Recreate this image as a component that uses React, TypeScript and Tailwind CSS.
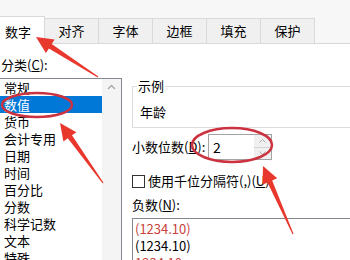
import React from "react";

const tabs = ["对齐", "字体", "边框", "填充", "保护"];
const categories = [
  "常规",
  "数值",
  "货币",
  "会计专用",
  "日期",
  "时间",
  "百分比",
  "分数",
  "科学记数",
  "文本",
  "特殊",
];
const negatives = [
  { text: "(1234.10)", red: true },
  { text: "(1234.10)", red: false },
  { text: "1234.10", red: true },
];

type Pt = [number, number];

// annotation arrow: thin shaft that widens into a triangular head
const arrowPoints = (tail: Pt, tip: Pt) => {
  const dx = tip[0] - tail[0];
  const dy = tip[1] - tail[1];
  const len = Math.hypot(dx, dy);
  const ux = dx / len;
  const uy = dy / len;
  const nx = -uy;
  const ny = ux;
  const head = 17;
  const base: Pt = [tip[0] - ux * head, tip[1] - uy * head];
  const p = (o: Pt, w: number): string =>
    `${(o[0] + nx * w).toFixed(1)},${(o[1] + ny * w).toFixed(1)}`;
  return [
    p(tail, 0.6),
    p(base, 2.6),
    p(base, 8),
    `${tip[0]},${tip[1]}`,
    p(base, -8),
    p(base, -2.6),
    p(tail, -0.6),
  ].join(" ");
};

const Annotations = () => (
  <svg
    className="absolute inset-0 pointer-events-none"
    width={350}
    height={260}
    viewBox="0 0 350 260"
  >
    <ellipse cx={37} cy={105} rx={35} ry={12} fill="none" stroke="#cc3340" strokeWidth={2.5} />
    <ellipse cx={232} cy={145} rx={40} ry={17} fill="none" stroke="#cc3340" strokeWidth={2.5} />
    <polygon points={arrowPoints([98, 77], [36, 37])} fill="#e8372d" />
    <polygon points={arrowPoints([103, 183], [60, 123])} fill="#e8372d" />
    <polygon points={arrowPoints([293, 234], [263, 166])} fill="#e8372d" />
  </svg>
);

export default function App() {
  return (
    <div
      className="relative w-[350px] h-[260px] overflow-hidden bg-white text-[13px] text-black"
      style={{ fontFamily: '"Noto Sans CJK SC", "Noto Sans", sans-serif' }}
    >
      {/* tab strip */}
      <div className="h-[44px] bg-[#f7f7f7] flex items-end">
        <div className="-ml-[9px] w-[54px] h-[28px] bg-white border border-b-0 border-[#d9d9d9] flex items-center justify-center pt-[2px] shrink-0">
          数字
        </div>
        {tabs.map((t) => (
          <div
            key={t}
            className="w-[54px] h-[26px] bg-[#f0f0f0] border-t border-r border-b border-[#d9d9d9] flex items-center justify-center shrink-0"
          >
            {t}
          </div>
        ))}
        <div className="flex-1 border-b border-[#d9d9d9]" />
      </div>

      {/* pane */}
      <div className="flex">
        <div className="-ml-[1px] w-[123px] shrink-0">
          <div className="mt-[14px] pl-[2px] leading-[14px]">
            分类(<u>C</u>):
          </div>
          <div className="mt-[6px] h-[200px] border border-[#828790] flex">
            <div className="flex-1">
              {categories.map((c, i) => (
                <div
                  key={c}
                  className={`h-[17px] leading-[17px] pl-[4px] ${
                    i === 1 ? "bg-[#0078d7] text-white" : ""
                  }`}
                >
                  {c}
                </div>
              ))}
            </div>
            <div className="w-[19px] bg-[#f4f4f4] flex justify-center pt-[5px]">
              <svg width="9" height="6" viewBox="0 0 9 6">
                <path d="M1 5 L4.5 1.5 L8 5" fill="none" stroke="#a6a6a6" strokeWidth="1.3" />
              </svg>
            </div>
          </div>
        </div>

        <div className="ml-[10px] flex-1 flex flex-col">
          <fieldset className="mt-[35px] w-[240px] border border-[#dcdcdc] pl-[7px] pt-[12px] pb-[8px]">
            <legend className="ml-[-3px] px-[1px] leading-[14px]">示例</legend>
            <div className="leading-[14px]">年龄</div>
          </fieldset>

          <div className="mt-[6px] flex items-center">
            <div className="w-[76px] leading-[14px]">
              小数位数(<u>D</u>):
            </div>
            <div className="w-[64px] h-[26px] border border-[#a3a3a3] flex">
              <div className="flex-1 pl-[4px] flex items-center text-[14px]">2</div>
              <div className="w-[17px] bg-[#f0f0f0] flex flex-col">
                <div className="flex-1 flex items-center justify-center border-b border-[#d4d4d4]">
                  <svg width="7" height="4" viewBox="0 0 7 4">
                    <path d="M0.5 3.5 L3.5 0.5 L6.5 3.5" fill="none" stroke="#b0b0b0" strokeWidth="1" />
                  </svg>
                </div>
                <div className="flex-1 flex items-center justify-center">
                  <svg width="7" height="4" viewBox="0 0 7 4">
                    <path d="M0.5 0.5 L3.5 3.5 L6.5 0.5" fill="none" stroke="#b0b0b0" strokeWidth="1" />
                  </svg>
                </div>
              </div>
            </div>
          </div>

          <div className="mt-[14px] flex items-center">
            <div className="w-[13px] h-[13px] border border-[#333] bg-white shrink-0" />
            <div className="ml-[3px] leading-[14px] whitespace-nowrap">
              使用千位分隔符(,)(<u>U</u>)
            </div>
          </div>

          <div className="mt-[10px] leading-[14px]">
            负数(<u>N</u>):
          </div>

          <div className="mt-[6px] w-[240px] h-[60px] border border-[#828790] pt-[1px] pl-[2px]">
            {negatives.map((n, i) => (
              <div
                key={i}
                className={`h-[17px] leading-[17px] ${n.red ? "text-[#c8423a]" : ""}`}
              >
                {n.text}
              </div>
            ))}
          </div>
        </div>
      </div>

      <Annotations />
    </div>
  );
}
